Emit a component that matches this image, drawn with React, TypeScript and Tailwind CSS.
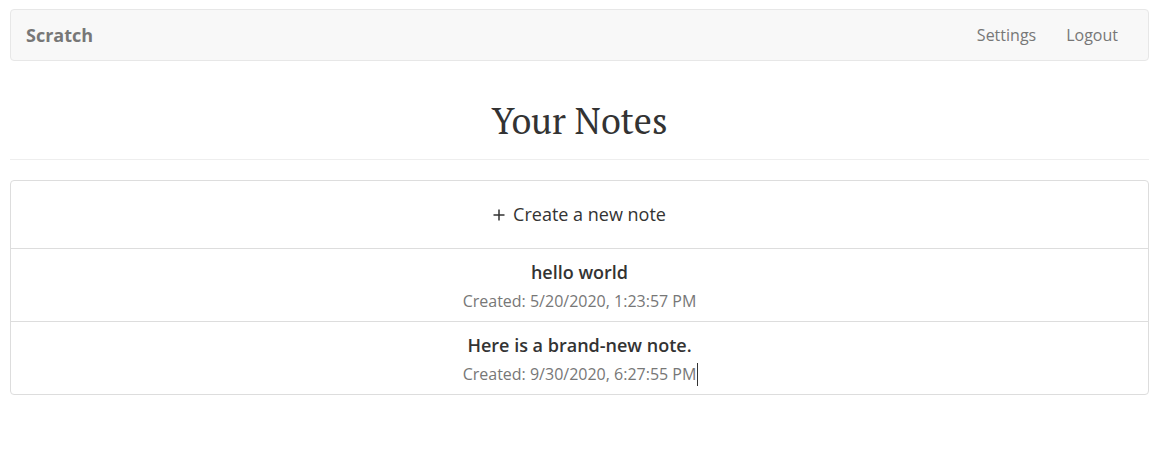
import React from "react";

const notes = [
  { id: "1", content: "hello world", created: "5/20/2020, 1:23:57 PM" },
  { id: "2", content: "Here is a brand-new note.", created: "9/30/2020, 6:27:55 PM" },
];

export default function App() {
  return (
    <div className="min-h-screen bg-white px-[10px] pt-[9px] font-['Open_Sans',sans-serif] text-[#333]">
      {/* Navbar */}
      <nav className="flex h-[52px] items-center justify-between rounded border border-[#e7e7e7] bg-[#f8f8f8] px-[15px]">
        <span className="text-[18px] font-bold text-[#777]">Scratch</span>
        <div className="flex text-[16px] text-[#777]">
          <span className="px-[15px]">Settings</span>
          <span className="px-[15px]">Logout</span>
        </div>
      </nav>

      {/* Header */}
      <div className="mt-[40px] border-b border-[#eee] pb-[18px] text-center">
        <h1 className="font-['PT_Serif','Liberation_Serif',serif] text-[36px] leading-[40px]">Your Notes</h1>
      </div>

      {/* List */}
      <div className="mt-[20px] rounded border border-[#ddd]">
        <div className="flex h-[67px] items-center justify-center gap-[8px] text-[18px] text-[#333]">
          <svg width="12" height="12" viewBox="0 0 12 12" className="shrink-0">
            <path d="M6 0.5v11M0.5 6h11" stroke="#333" strokeWidth="1.5" fill="none" />
          </svg>
          <span>Create a new note</span>
        </div>
        {notes.map((note) => (
          <div key={note.id} className="flex h-[73px] flex-col items-center border-t border-[#ddd] pt-[10px]">
            <span className="text-[18px] font-semibold leading-[26px] text-[#333]">{note.content}</span>
            <span className="relative mt-[5px] text-[16px] leading-[22px] text-[#777]">
              Created: {note.created}
              {note.id === "2" && <span className="absolute -right-[2px] top-0 h-[23px] w-px bg-[#333]" />}
            </span>
          </div>
        ))}
      </div>
    </div>
  );
}
